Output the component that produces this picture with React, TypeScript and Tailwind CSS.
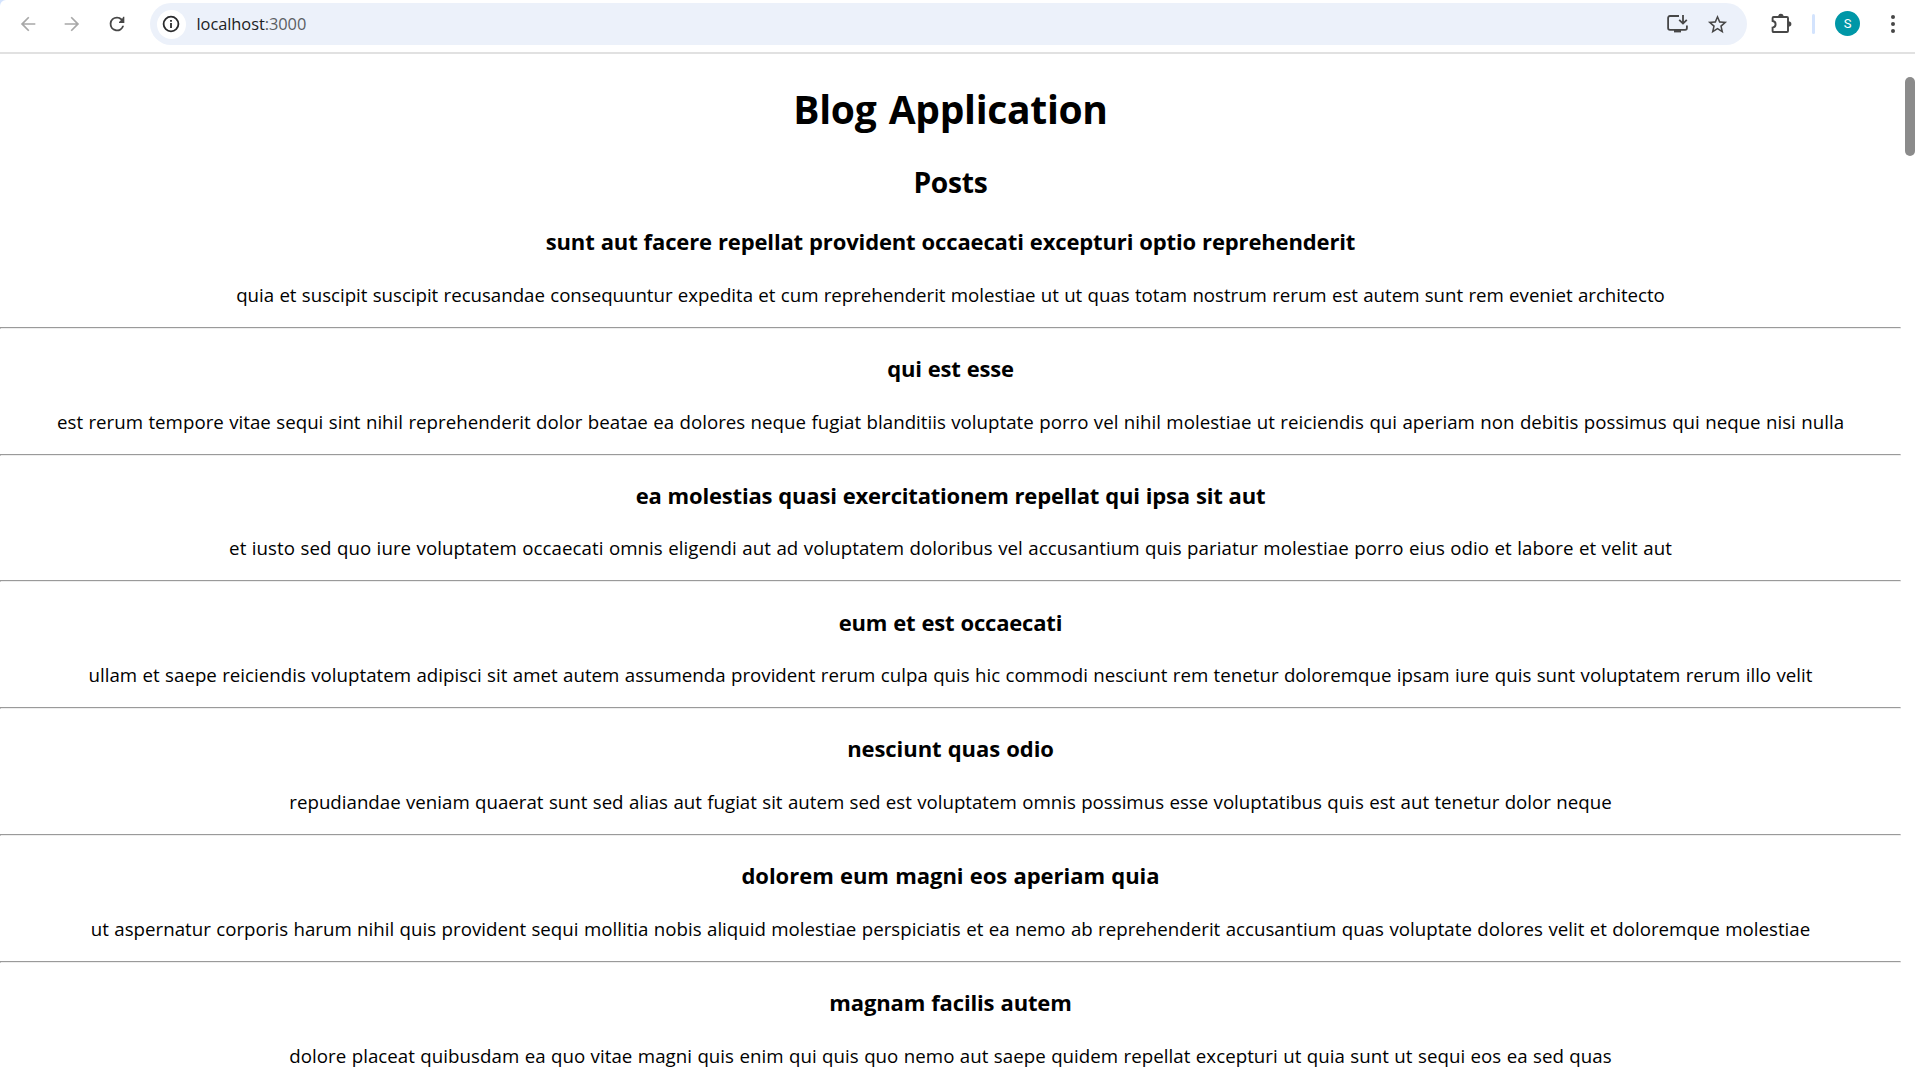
import React from "react";

type Post = { title: string; body: string; titleClass: string; bodyClass: string };

const posts: Post[] = [
  {
    title: "sunt aut facere repellat provident occaecati excepturi optio reprehenderit",
    body: "quia et suscipit suscipit recusandae consequuntur expedita et cum reprehenderit molestiae ut ut quas totam nostrum rerum est autem sunt rem eveniet architecto",
    titleClass: "tracking-[-0.14px]",
    bodyClass: "tracking-[-0.027px]",
  },
  {
    title: "qui est esse",
    body: "est rerum tempore vitae sequi sint nihil reprehenderit dolor beatae ea dolores neque fugiat blanditiis voluptate porro vel nihil molestiae ut reiciendis qui aperiam non debitis possimus qui neque nisi nulla",
    titleClass: "tracking-[-0.2px]",
    bodyClass: "tracking-[0.018px]",
  },
  {
    title: "ea molestias quasi exercitationem repellat qui ipsa sit aut",
    body: "et iusto sed quo iure voluptatem occaecati omnis eligendi aut ad voluptatem doloribus vel accusantium quis pariatur molestiae porro eius odio et labore et velit aut",
    titleClass: "tracking-[-0.19px]",
    bodyClass: "tracking-[0.058px]",
  },
  {
    title: "eum et est occaecati",
    body: "ullam et saepe reiciendis voluptatem adipisci sit amet autem assumenda provident rerum culpa quis hic commodi nesciunt rem tenetur doloremque ipsam iure quis sunt voluptatem rerum illo velit",
    titleClass: "tracking-[-0.18px]",
    bodyClass: "tracking-[0.011px]",
  },
  {
    title: "nesciunt quas odio",
    body: "repudiandae veniam quaerat sunt sed alias aut fugiat sit autem sed est voluptatem omnis possimus esse voluptatibus quis est aut tenetur dolor neque",
    titleClass: "tracking-[-0.06px]",
    bodyClass: "tracking-normal",
  },
  {
    title: "dolorem eum magni eos aperiam quia",
    body: "ut aspernatur corporis harum nihil quis provident sequi mollitia nobis aliquid molestiae perspiciatis et ea nemo ab reprehenderit accusantium quas voluptate dolores velit et doloremque molestiae",
    titleClass: "tracking-[-0.02px]",
    bodyClass: "tracking-[0.012px]",
  },
  {
    title: "magnam facilis autem",
    body: "dolore placeat quibusdam ea quo vitae magni quis enim qui quis quo nemo aut saepe quidem repellat excepturi ut quia sunt ut sequi eos ea sed quas",
    titleClass: "tracking-[-0.14px]",
    bodyClass: "tracking-[0.038px]",
  },
];

function Toolbar() {
  return (
    <header className="h-[54px] shrink-0 bg-[#d3e3fd]">
      <div className="flex h-full items-start rounded-tl-[6px] border-b-2 border-[#e1e1e1] bg-white pt-[3px]">
        <div className="flex h-[41px] w-[150px] shrink-0 items-center gap-[22.5px] pl-[16.5px]">
          <svg className="size-[22px] text-[#a8a8a8]" viewBox="0 0 24 24" fill="currentColor">
            <path d="M20 11.1H7.7l5.8-5.8L12.2 4l-8 8 8 8 1.3-1.3-5.8-5.8H20z" />
          </svg>
          <svg className="size-[22px] text-[#a8a8a8]" viewBox="0 0 24 24" fill="currentColor">
            <path d="M4 11.1h12.3l-5.8-5.8L11.8 4l8 8-8 8-1.3-1.3 5.8-5.8H4z" />
          </svg>
          <svg className="size-[22px] text-[#474747]" viewBox="0 0 24 24" fill="currentColor">
            <path d="M17.65 6.35A7.96 7.96 0 0 0 12 4a8 8 0 1 0 7.73 10h-2.08A6 6 0 1 1 12 6c1.66 0 3.14.69 4.22 1.78L14.2 9.8v1.2H20V4h-1.2z" />
          </svg>
        </div>
        <div className="flex h-[42px] w-[1597px] shrink-0 items-center rounded-full bg-[#ecf1fa] pl-[6.5px] pr-[18px]">
          <div className="flex size-[29px] items-center justify-center rounded-full bg-white">
            <svg className="size-[18px] text-[#2a2b2d]" viewBox="0 0 18 18" fill="none" stroke="currentColor" strokeWidth="1.8">
              <circle cx="9" cy="9" r="7.4" />
              <path d="M9 8v5M9 5v1.8" />
            </svg>
          </div>
          <span className="ml-[11px] font-['Open_Sans',sans-serif] text-[16.4px] leading-6 tracking-[-0.05px] text-[#202124]">
            localhost<span className="text-[#5b5e63]">:3000</span>
          </span>
          <svg className="ml-auto h-[18px] w-[21px] text-[#474747]" viewBox="0 0 21 18" fill="none" stroke="currentColor" strokeWidth="1.8">
            <path d="M12 1H3Q1.1 1 1.1 3v10Q1.1 14.8 3 14.8h15.2q1.7 0 1.7-1.8v-2.4" />
            <path d="M16 0v8M12.2 4.8 16 8.6l3.8-3.8" />
            <path d="M7 14.8h7V17.4H7z" fill="currentColor" stroke="none" />
          </svg>
          <svg className="ml-[18px] size-[23px] text-[#474747]" viewBox="0 0 24 24" fill="currentColor">
            <path d="m22 9.24-7.19-.62L12 2 9.19 8.63 2 9.24l5.46 4.73L5.82 21 12 17.27 18.18 21l-1.63-7.03zM12 15.4l-3.76 2.27 1-4.28-3.32-2.88 4.38-.38L12 6.1l1.71 4.04 4.38.38-3.32 2.88 1 4.28z" />
          </svg>
        </div>
        <div className="flex h-[41px] items-center">
          <svg className="mb-px ml-[24px] h-5 w-[22px] text-[#474747]" viewBox="0 0 22 20" fill="none" stroke="currentColor" strokeWidth="1.9">
            <path d="M2.6 4H16q1 0 1 1v13q0 1-1 1H2.6q-1 0-1-1v-3.4C5.6 14 5.6 8.6 1.6 8V5q0-1 1-1z" />
            <path d="M7 4a2.8 3.2 0 0 1 5.6 0zM17 8.2a3.4 2.8 0 0 1 0 5.6z" fill="currentColor" stroke="none" />
          </svg>
          <div className="ml-[19px] h-5 w-[3px] rounded-full bg-[#d3e3fd]" />
          <div className="ml-5 flex size-[25px] items-center justify-center rounded-full bg-[#0097a7] font-[Roboto,sans-serif] text-[13px] leading-none text-white">
            S
          </div>
          <svg className="ml-[29.5px] h-[20px] w-[6px] text-[#474747]" viewBox="0 0 6 20" fill="currentColor">
            <circle cx="3" cy="3" r="2" />
            <circle cx="3" cy="10" r="2" />
            <circle cx="3" cy="17" r="2" />
          </svg>
        </div>
      </div>
    </header>
  );
}

export default function App() {
  return (
    <div className="flex h-[1075px] w-[1915px] flex-col overflow-hidden bg-white font-['Open_Sans','Noto_Sans',sans-serif] text-black">
      <Toolbar />
      <div className="flex min-h-0 flex-1">
        <main className="w-[1901px] shrink-0 overflow-hidden whitespace-nowrap text-center">
          <h1 className="mt-7 text-[39px] font-bold leading-[54px] tracking-[-0.3px] [word-spacing:2.5px]">Blog Application</h1>
          <h2 className="mt-[26px] text-[28.2px] font-bold leading-10 tracking-[-0.25px]">Posts</h2>
          <div>
            {posts.map((post) => (
              <article key={post.title} className="flex h-[126.8px] flex-col pt-[23.2px]">
                <h3 className={`text-[22px] font-bold leading-8 [word-spacing:0.5px] ${post.titleClass}`}>{post.title}</h3>
                <p className={`mt-[23.6px] text-[18.7px] leading-7 [word-spacing:0.5px] ${post.bodyClass}`}>{post.body}</p>
                <hr className="mt-auto h-[2px] border border-b-[#eeeeee] border-l-[#9a9a9a] border-r-[#eeeeee] border-t-[#9a9a9a]" />
              </article>
            ))}
          </div>
        </main>
        <div className="flex flex-1 justify-end pt-[23px]">
          <div className="h-[79px] w-[10px] rounded-[5px] bg-[#8b8b8b]" />
        </div>
      </div>
    </div>
  );
}
